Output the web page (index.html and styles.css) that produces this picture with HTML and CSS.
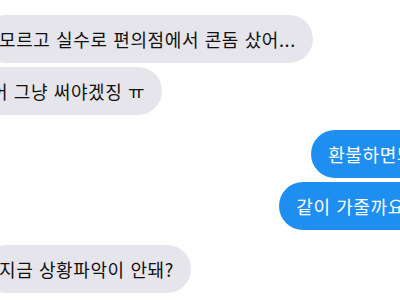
FILE: index.html
```html
<!DOCTYPE html>
<html lang="ko">
<head>
    <meta charset="UTF-8">
    <meta name="viewport" content="width=device-width, initial-scale=1.0">
    <title>Messages</title>
    <link rel="stylesheet" href="styles.css">
</head>
<body>
    <div class="chat">
        <div class="group received">
            <div class="bubble">모르고 실수로 편의점에서 콘돔 샀어...</div>
            <div class="bubble shift">어 그냥 써야겠징 ㅠ</div>
        </div>

        <div class="group sent">
            <div class="bubble">환불하면되</div>
            <div class="bubble">같이 가줄까요?</div>
        </div>

        <div class="group received">
            <div class="bubble">지금 상황파악이 안돼?</div>
        </div>
    </div>
</body>
</html>
```

FILE: styles.css
```css
body {
    margin: 0;
    padding: 0;
    background-color: #fff;
    font-family: "Noto Sans CJK KR", "Noto Sans", sans-serif;
    overflow: hidden;
}

.chat {
    display: flex;
    flex-direction: column;
    gap: 15px;
    padding-top: 15px;
}

.group {
    display: flex;
    flex-direction: column;
    gap: 4px;
}

.group.received {
    align-items: flex-start;
    margin-left: -18px;
}

.group.sent {
    align-items: flex-end;
    margin-right: -31px;
}

.bubble {
    font-size: 18px;
    letter-spacing: 0.6px;
    line-height: 24px;
    padding: 12px 17px;
    border-radius: 24px;
    white-space: nowrap;
}

.received .bubble {
    background-color: #e6e5eb;
    color: #111;
}

.received .bubble.shift {
    margin-left: -8px;
}

.sent .bubble {
    background-color: #1f8ef1;
    color: #fff;
}
```
